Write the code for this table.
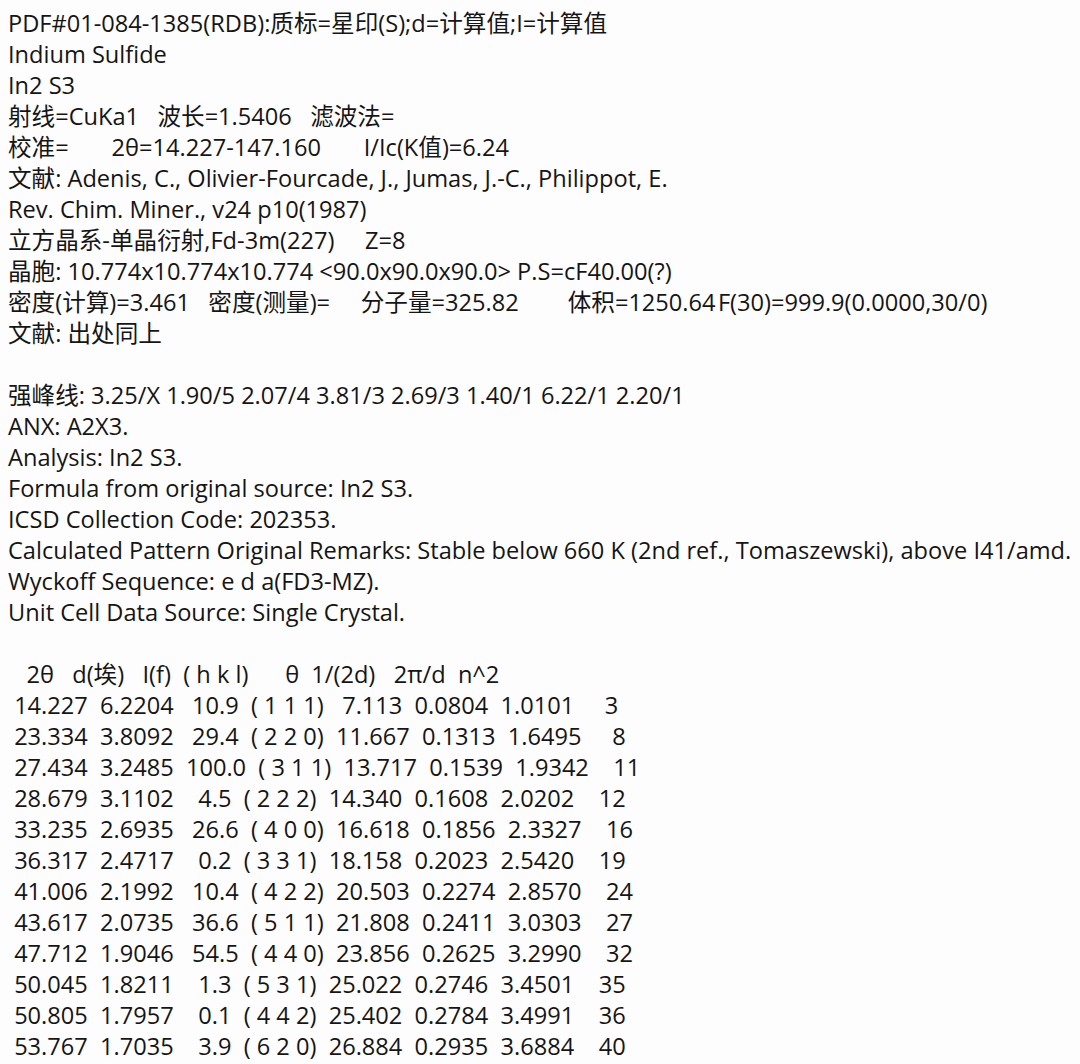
const header = [
  'PDF#01-084-1385(RDB):质标=星印(S);d=计算值;I=计算值',
  'Indium Sulfide',
  'In2 S3',
  '射线=CuKa1   波长=1.5406   滤波法=',
  '校准=       2θ=14.227-147.160       I/Ic(K值)=6.24',
  '文献: Adenis, C., Olivier-Fourcade, J., Jumas, J.-C., Philippot, E.',
  'Rev. Chim. Miner., v24 p10(1987)',
  '立方晶系-单晶衍射,Fd-3m(227)     Z=8',
  '晶胞: 10.774x10.774x10.774 <90.0x90.0x90.0> P.S=cF40.00(?)',
  '密度(计算)=3.461   密度(测量)=     分子量=325.82        体积=1250.64\u200AF(30)=999.9(0.0000,30/0)',
  '文献: 出处同上',
  '',
  '强峰线: 3.25/X 1.90/5 2.07/4 3.81/3 2.69/3 1.40/1 6.22/1 2.20/1',
  'ANX: A2X3.',
  'Analysis: In2 S3.',
  'Formula from original source: In2 S3.',
  'ICSD Collection Code: 202353.',
  'Calculated Pattern Original Remarks: Stable below 660 K (2nd ref., Tomaszewski), above I41/amd.',
  'Wyckoff Sequence: e d a(FD3-MZ).',
  'Unit Cell Data Source: Single Crystal.',
  '',
  '   2θ   d(埃)   I(f)  ( h k l)      θ  1/(2d)   2π/d  n^2',
];

const peaks = [
  ['14.227', '6.2204', '10.9', '1 1 1', '7.113', '0.0804', '1.0101', '3'],
  ['23.334', '3.8092', '29.4', '2 2 0', '11.667', '0.1313', '1.6495', '8'],
  ['27.434', '3.2485', '100.0', '3 1 1', '13.717', '0.1539', '1.9342', '11'],
  ['28.679', '3.1102', '4.5', '2 2 2', '14.340', '0.1608', '2.0202', '12'],
  ['33.235', '2.6935', '26.6', '4 0 0', '16.618', '0.1856', '2.3327', '16'],
  ['36.317', '2.4717', '0.2', '3 3 1', '18.158', '0.2023', '2.5420', '19'],
  ['41.006', '2.1992', '10.4', '4 2 2', '20.503', '0.2274', '2.8570', '24'],
  ['43.617', '2.0735', '36.6', '5 1 1', '21.808', '0.2411', '3.0303', '27'],
  ['47.712', '1.9046', '54.5', '4 4 0', '23.856', '0.2625', '3.2990', '32'],
  ['50.045', '1.8211', '1.3', '5 3 1', '25.022', '0.2746', '3.4501', '35'],
  ['50.805', '1.7957', '0.1', '4 4 2', '25.402', '0.2784', '3.4991', '36'],
  ['53.767', '1.7035', '3.9', '6 2 0', '26.884', '0.2935', '3.6884', '40'],
];

// fixed-width columns, shown in a proportional font like the original text view
function row(p) {
  const [tt, d, i, hkl, th, inv, k, n] = p;
  return (
    ' ' + tt.padStart(6) + '  ' + d.padStart(6) + '  ' + i.padStart(5) +
    '  ( ' + hkl + ')  ' + th.padStart(6) + '  ' + inv + '  ' + k + '  ' + n.padStart(4)
  );
}

export default function App() {
  const lines = [...header, ...peaks.map(row)];
  return (
    <div className="min-h-screen w-full bg-[#fdfdfd] pl-[8px] pt-[8px] text-[23.6px] leading-[31px] text-[#151515] font-['Open_Sans','Noto_Sans_CJK_SC',sans-serif]">
      {lines.map((l, idx) => (
        <div key={idx} className="h-[31px] whitespace-pre">
          {l}
        </div>
      ))}
    </div>
  );
}
